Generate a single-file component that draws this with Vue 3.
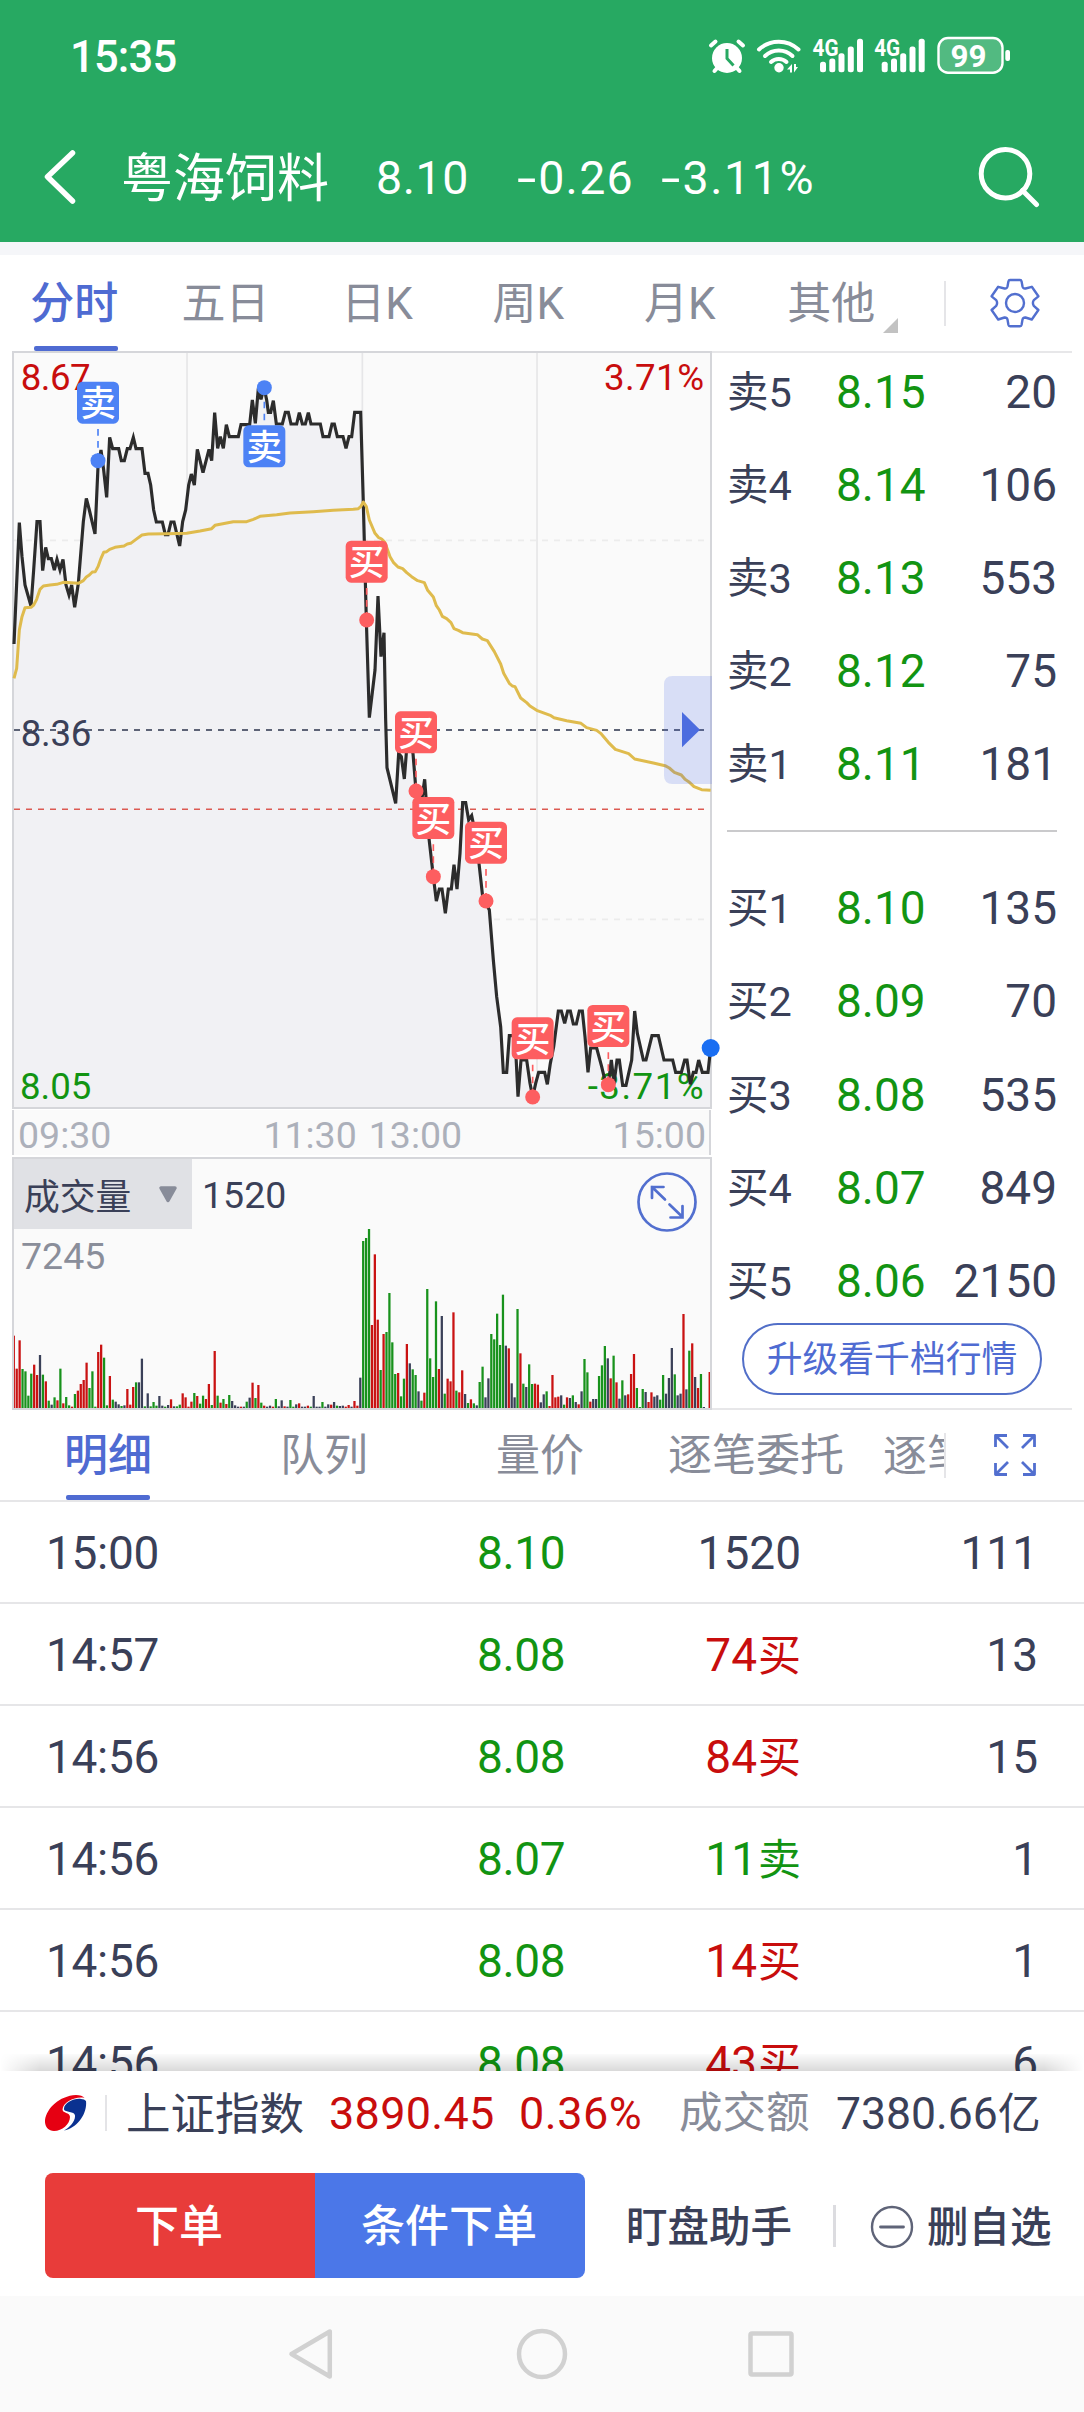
<script setup>
const periodTabs = ['分时', '五日', '日K', '周K', '月K', '其他']

const asks = [
  ['卖5', '8.15', '20'],
  ['卖4', '8.14', '106'],
  ['卖3', '8.13', '553'],
  ['卖2', '8.12', '75'],
  ['卖1', '8.11', '181'],
]
const bids = [
  ['买1', '8.10', '135'],
  ['买2', '8.09', '70'],
  ['买3', '8.08', '535'],
  ['买4', '8.07', '849'],
  ['买5', '8.06', '2150'],
]

const detailTabs = ['明细', '队列', '量价', '逐笔委托']

const trades = [
  { time: '15:00', price: '8.10', vol: '1520', side: '', count: '111' },
  { time: '14:57', price: '8.08', vol: '74', side: '买', count: '13' },
  { time: '14:56', price: '8.08', vol: '84', side: '买', count: '15' },
  { time: '14:56', price: '8.07', vol: '11', side: '卖', count: '1' },
  { time: '14:56', price: '8.08', vol: '14', side: '买', count: '1' },
  { time: '14:56', price: '8.08', vol: '43', side: '买', count: '6' },
]
const sideClass = { 买: 'red', 卖: 'green', '': '' }

// Chart space uses three units per pixel.
const price =
  '42,912 58,548 66,650 75,735 93,798 101,690 111,545 120,545 128,692 137,622 145,656 154,656 163,690 171,658 180,690 189,658 198,735 207,765 215,735 224,802 235,730 250,545 259,475 268,510 285,582 294,380 303,330 311,390 320,472 329,292 338,326 356,326 364,362 373,362 382,326 390,326 400,292 408,326 426,326 435,400 444,400 452,435 461,510 469,546 487,546 496,584 504,584 513,546 522,546 539,618 548,545 557,510 566,435 574,402 583,435 592,328 609,398 627,328 635,362 644,218 653,325 661,290 670,325 679,254 688,290 715,290 723,254 749,254 757,180 766,250 775,145 783,178 792,142 800,180 805,217 812,217 820,182 829,252 847,252 856,217 865,217 873,252 890,252 898,218 907,252 916,252 925,218 933,252 961,252 969,290 987,290 996,252 1003,252 1012,290 1029,290 1038,325 1047,290 1055,290 1064,217 1082,217 1090,490 1099,840 1108,1133 1125,990 1134,768 1143,950 1152,878 1157,1140 1161,1283 1187,1390 1196,1240 1204,1250 1213,1317 1222,1200 1239,1240 1248,1353 1257,1370 1266,1375 1274,1318 1280,1400 1287,1495 1300,1610 1309,1683 1318,1647 1326,1647 1336,1720 1345,1647 1354,1647 1362,1574 1371,1647 1380,1540 1388,1388 1397,1388 1406,1440 1415,1427 1424,1470 1437,1570 1448,1670 1468,1710 1480,1860 1490,1970 1502,2060 1510,2197 1520,2197 1528,2087 1545,2087 1554,2270 1563,2160 1580,2160 1590,2230 1598,2271 1607,2230 1616,2197 1634,2197 1642,2233 1651,2170 1661,2120 1675,2013 1684,2013 1694,2050 1703,2013 1711,2013 1720,2052 1729,2052 1738,2013 1747,2013 1755,2090 1764,2197 1772,2124 1790,2124 1805,2180 1817,2230 1825,2234 1834,2160 1842,2230 1851,2160 1858,2160 1868,2236 1878,2236 1886,2200 1895,2160 1904,2013 1912,2080 1921,2120 1930,2160 1938,2160 1956,2087 1975,2087 1992,2160 2018,2160 2027,2197 2044,2197 2054,2160 2061,2160 2071,2233 2080,2197 2088,2197 2096,2160 2107,2197 2124,2197 2132,2124'

const average =
  '42,1015 50,985 58,870 66,830 75,803 93,802 101,795 110,778 120,748 130,738 150,735 170,733 190,727 235,730 250,722 259,711 268,705 277,696 286,695 294,680 303,655 311,637 320,635 329,628 345,622 372,618 382,612 392,610 408,598 426,585 445,582 500,581 560,580 600,573 635,566 645,556 680,549 700,545 740,545 760,538 780,529 830,524 870,519 940,515 1000,511 1060,508 1075,506 1082,500 1090,486 1099,500 1108,540 1125,580 1135,592 1145,597 1154,606 1163,630 1170,650 1180,667 1194,681 1208,686 1220,698 1235,710 1253,722 1273,728 1283,751 1300,771 1309,797 1318,810 1327,829 1340,836 1353,848 1362,866 1375,871 1388,878 1432,884 1447,897 1462,902 1483,935 1502,972 1511,1000 1528,1030 1537,1038 1545,1040 1562,1074 1580,1088 1590,1098 1610,1111 1653,1127 1662,1133 1700,1142 1743,1150 1760,1163 1790,1171 1802,1180 1825,1207 1846,1228 1886,1241 1904,1257 1960,1269 1995,1277 2008,1284 2023,1297 2044,1305 2055,1318 2066,1325 2082,1340 2105,1349 2132,1351'

// x, y: trade dot; top: upper edge of its tag
const markers = [
  { kind: '卖', x: 294, y: 362, top: 125 },
  { kind: '卖', x: 793, y: 143, top: 256 },
  { kind: '买', x: 1100, y: 840, top: 602 },
  { kind: '买', x: 1248, y: 1353, top: 1114 },
  { kind: '买', x: 1300, y: 1610, top: 1371 },
  { kind: '买', x: 1458, y: 1683, top: 1445 },
  { kind: '买', x: 1598, y: 2271, top: 2032 },
  { kind: '买', x: 1825, y: 2234, top: 1995 },
].map((m) => ({
  ...m,
  color: m.kind === '卖' ? '#4d82f5' : '#fd5e60',
  y1: m.y > m.top ? m.top + 142 : m.y + 42,
  y2: m.y > m.top ? m.y - 20 : m.top,
}))

// One bar per minute: colour letter and height.
const colors = { r: '#c91212', g: '#18921c', d: '#3a4058' }
const bars = (
  'r217 r118 r203 g117 g110 g37 g103 r130 r99 d159 g100 r80 g22 d10 g32 r23 g118 r14 g33 g8 r4 g42 r52 r72 r84 r136 g60 g110 g4 r168 r190 g151 g8 r96 g25 d19 d11 g6 d8 r57 r10 r63 g77 d77 d148 g5 d44 g5 g18 g7 d36 d7 g4 d9 r26 d5 g5 g10 r44 r32 r4 r19 g45 r36 g13 g37 r27 r72 g9 r171 g37 r16 g27 r12 g39 d21 d8 d4 r4 d4 g19 d31 r76 g30 r69 g16 r7 d4 d7 r4 g27 d5 d23 r5 d4 g24 g4 d11 r14 d4 d4 r7 g4 d36 d4 d4 g18 d4 d11 r10 d18 g7 d6 d7 r4 r9 d4 r21 r7 d91 ' +
  'g501 g510 g537 r249 r461 r265 g114 r222 g228 g345 g197 g102 r105 g35 g88 r192 d134 g116 g99 d50 g22 r46 g357 g149 g93 g320 r117 d276 g43 r88 r80 r287 g52 r47 r113 d42 g15 r26 g14 d8 g78 g124 d32 d89 g222 g206 g283 g189 g340 d187 r179 d74 d32 g297 r164 g73 d63 g131 g72 r73 r70 d17 d41 g50 r6 r99 r32 r34 d38 g10 r32 d30 g38 d18 r11 d50 g147 g107 r19 d27 d27 g96 g128 g186 d149 r89 g157 r77 d28 g83 d38 r41 r102 r162 g60 g3 g57 d48 r18 r47 d34 d38 g25 g99 d43 d90 d180 g101 d38 d43 r282 d56 g172 r194 d93 r60 g102 d3 d0 r108'
)
  .split(' ')
  .map((s, i) => ({ x: 38 + i * 8.735, h: +s.slice(1), fill: colors[s[0]] }))
</script>

<template>
  <div class="screen">
    <header class="top">
      <div class="status">
        <span class="clock">15:35</span>
        <svg class="sysicons" width="309" height="44" viewBox="704 34 309 44" fill="#fff">
          <circle cx="727" cy="58" r="15" />
          <g stroke="#fff" stroke-width="4" stroke-linecap="round">
            <path d="M711 45.500L715.500 41.500M743 45.500L738.500 41.500" />
            <path d="M718 67L714.500 71M736 67L739.500 71" />
          </g>
          <path d="M727 49V58.500L733.500 65.500" fill="none" stroke="#27a962" stroke-width="3" />
          <g fill="none" stroke="#fff" stroke-width="4" stroke-linecap="round">
            <path d="M759 49.500A29 29 0 0 1 798.500 49.500" />
            <path d="M765 56A20 20 0 0 1 792.500 56" />
            <path d="M771 62A11.500 11.500 0 0 1 786.500 62" />
          </g>
          <circle cx="779" cy="67.700" r="4.700" />
          <path d="M787 69.500L792 64V72.500H790V69.500ZM800.800 67H798L794 72.500V64H796V67Z" />
          <g v-for="dx in [0, 61.700]" :key="dx" :transform="`translate(${dx} 0)`">
            <text x="812.500" y="55.500" font-size="23" font-weight="700" textLength="26" lengthAdjust="spacingAndGlyphs">4G</text>
            <rect x="820" y="61.700" width="6" height="10.500" rx="2.500" />
            <rect x="829.300" y="58.500" width="6" height="13.700" rx="2.500" />
            <rect x="838.500" y="53.300" width="6" height="18.900" rx="2.500" />
            <rect x="847.800" y="46.600" width="6" height="25.600" rx="2.500" />
            <rect x="857" y="38.700" width="6" height="33.500" rx="2.500" />
          </g>
          <rect x="938.500" y="38" width="64" height="34.700" rx="9.500" fill="#fff" fill-opacity=".2" stroke="#fff" stroke-width="2.400" />
          <text x="950.500" y="67" font-size="32" font-weight="700" textLength="36" lengthAdjust="spacingAndGlyphs">99</text>
          <rect x="1005.300" y="50" width="4.700" height="11" rx="2" />
        </svg>
      </div>
      <div class="title">
        <svg class="back" width="40" height="60" viewBox="40 146 40 60">
          <path d="M72.500 152L47.500 175.700L72.500 200" fill="none" stroke="#fff" stroke-width="5.500" stroke-linecap="round" stroke-linejoin="round" />
        </svg>
        <span class="name">粤海饲料</span>
        <span class="quote">8.10</span>
        <span class="quote diff"><b>-</b>0.26</span>
        <span class="quote pct"><b>-</b>3.11%</span>
        <svg class="search" width="64" height="64" viewBox="976 144 64 64" fill="none" stroke="#fff" stroke-width="5" stroke-linecap="round">
          <circle cx="1005.500" cy="172.700" r="24.300" />
          <path d="M1022.500 189.500L1036.500 203.500" />
        </svg>
      </div>
    </header>

    <nav class="periods">
      <span v-for="(t, i) in periodTabs" :key="t" class="tab" :class="{ active: i === 0 }">
        {{ t }}
        <svg v-if="t === '其他'" class="corner" width="15" height="15" viewBox="0 0 15 15"><path d="M15 0V15H0Z" fill="#c2c2c2" /></svg>
      </span>
      <i class="vline"></i>
      <svg class="gear" width="52" height="52" viewBox="-26 -26 52 52" fill="none" stroke="#526fcf" stroke-width="2.400" stroke-linejoin="round">
        <path d="M-5 -23H5Q6.300 -23 6.600 -21.500L7.500 -16.500Q8.200 -14.200 10.500 -14.500L16.800 -16.200L23.400 -6.700L18.800 -2.800Q17 0 18.800 2.800L23.400 7L16.800 16.500L10.500 14.500Q8.200 14.300 7.500 16.500L6.600 21.800Q6.300 23.300 5 23.300H-5Q-6.300 23.300 -6.600 21.800L-7.500 16.500Q-8.200 14.300 -10.500 14.500L-16.800 16.500L-23.400 7L-18.800 2.800Q-17 0 -18.800 -2.800L-23.400 -6.700L-16.800 -16.200L-10.500 -14.500Q-8.200 -14.200 -7.500 -16.500L-6.600 -21.500Q-6.300 -23 -5 -23Z" />
        <circle r="9" />
      </svg>
    </nav>

    <main class="market">
      <section class="charts">
        <svg class="plot" width="700" height="758" viewBox="36 33 2100 2274">
          <rect x="39" y="36" width="2094" height="2268" fill="#fafafa" />
          <g stroke="#e6e6e8" stroke-width="5">
            <path d="M561 36V2304M1087 36V2304M1611 36V2304" />
            <path d="M42 601H2130M42 1738H2130" stroke="#ececec" stroke-dasharray="18" />
          </g>
          <polygon :points="`42,2301 ${price} 2132,2301`" fill="#f1f1f4" />
          <path d="M42 1170H2130" stroke="#5d6376" stroke-width="5.500" stroke-dasharray="18" />
          <path d="M42 1408H2130" stroke="#dc5a52" stroke-width="4.500" stroke-dasharray="18" />
          <rect x="39" y="36" width="2094" height="2268" fill="none" stroke="#d5d6da" stroke-width="6" />
          <g font-size="110">
            <text x="62" y="150" fill="#c80d0d" textLength="210">8.67</text>
            <text x="1812" y="150" fill="#c80d0d" textLength="300">3.71%</text>
            <text x="62" y="1217" fill="#3a4058" textLength="212">8.36</text>
            <text x="60" y="2277" fill="#129412" textLength="214">8.05</text>
            <text x="1763" y="2276" fill="#129412" textLength="348">-3.71%</text>
          </g>
          <polyline :points="price" fill="none" stroke="#2c2c2c" stroke-width="9.500" />
          <polyline :points="average" fill="none" stroke="#dfbb4d" stroke-width="9" stroke-linejoin="round" />
          <g v-for="m in markers" :key="m.x">
            <path :d="`M${m.x} ${m.y1}V${m.y2}`" :stroke="m.color" stroke-width="5" stroke-dasharray="20 16" />
            <circle :cx="m.x" :cy="m.y" r="22.500" :fill="m.color" />
            <rect :x="m.x - 63" :y="m.top" width="126" height="126" rx="16" :fill="m.color" />
            <text :x="m.x" :y="m.top + 104" font-size="107" font-weight="500" fill="#fff" text-anchor="middle">{{ m.kind }}</text>
          </g>
          <path d="M2136 1008H2018Q1992 1008 1992 1034V1306Q1992 1332 2018 1332H2136Z" fill="#4466e6" fill-opacity=".19" />
          <path d="M2046 1116L2100 1169L2046 1222Z" fill="#4c6cdf" />
          <circle cx="2132" cy="2124" r="27" fill="#1a6ef2" />
        </svg>

        <div class="axis">
          <span>09:30</span><span class="noon">11:30</span><span class="pm">13:00</span><span class="close">15:00</span>
        </div>

        <div class="volume">
          <svg class="bars" width="696" height="249" viewBox="42 297 2088 747">
            <rect v-for="(b, i) in bars" :key="i" :x="b.x" :y="1044 - b.h" width="6.800" :height="b.h" :fill="b.fill" />
          </svg>
          <div class="volhead">
            <span class="picker">成交量
              <svg width="20" height="17" viewBox="0 0 20 17"><path d="M3 2H17L10 14.500Z" fill="#888c99" stroke="#888c99" stroke-width="3.500" stroke-linejoin="round" /></svg>
            </span>
            <span class="volnow">1520</span>
            <svg class="expand" width="60" height="60" viewBox="-30 -30 60 60" fill="none" stroke="#526fcf" stroke-width="2.700">
              <circle r="28.500" />
              <path d="M-2 -2.500L-15 -15M-15 -4V-15H-3.500M2.500 2.500L15.500 15M15.500 4V15.500H3.500" stroke-linecap="round" />
            </svg>
          </div>
          <div class="volmax">7245</div>
        </div>
      </section>

      <aside class="book">
        <div class="side">
          <div v-for="r in asks" :key="r[0]" class="level">
            <span class="lv">{{ r[0] }}</span><span class="px">{{ r[1] }}</span><span class="qty">{{ r[2] }}</span>
          </div>
        </div>
        <div class="split"></div>
        <div class="side">
          <div v-for="r in bids" :key="r[0]" class="level">
            <span class="lv">{{ r[0] }}</span><span class="px">{{ r[1] }}</span><span class="qty">{{ r[2] }}</span>
          </div>
        </div>
        <button class="upgrade">升级看千档行情</button>
      </aside>
    </main>

    <nav class="details">
      <span v-for="(t, i) in detailTabs" :key="t" class="dtab" :class="{ active: i === 0 }">{{ t }}</span>
      <span class="cut">逐笔</span>
      <svg class="full" width="44" height="44" viewBox="0 0 44 44" fill="none" stroke="#526fcf" stroke-width="2.800" stroke-linejoin="round">
        <path d="M2.500 14V2.500H14M2.500 2.500L15 15M30 2.500H41.500V14M41.500 2.500L29 15M2.500 30V41.500H14M2.500 41.500L15 29M30 41.500H41.500V30M41.500 41.500L29 29" />
      </svg>
    </nav>

    <section class="trades">
      <div v-for="(t, i) in trades" :key="i" class="trade">
        <span class="time">{{ t.time }}</span>
        <span class="deal green">{{ t.price }}</span>
        <span class="amount" :class="sideClass[t.side]">{{ t.vol }}<em v-if="t.side">{{ t.side }}</em></span>
        <span class="count">{{ t.count }}</span>
      </div>
    </section>

    <footer class="dock">
      <div class="index">
        <svg class="logo" width="42" height="37" viewBox="0 0 42 37">
          <path d="M0 25C2 13 14 1 31 0C35 0 38 1 39.500 3C31 1 18 7 17.500 14.500C17.500 18.500 25 17 25 22C25 29 17 36 9 36C3 36 -.5 31 0 25Z" fill="#e60012" />
          <path d="M41 6C42.500 19 32 33 19 35.500C25 32 30.500 26 30 20.500C29.500 16 20 17.500 19 14.500C18.500 8 29 3 36 4Q39.500 4 41 6Z" fill="#0a3190" />
        </svg>
        <i class="ivline"></i>
        <span class="iname">上证指数</span>
        <span class="ival red">3890.45</span>
        <span class="ipct red">0.36%</span>
        <span class="tlabel">成交额</span>
        <span class="tval">7380.66<em>亿</em></span>
      </div>
      <div class="actions">
        <button class="order">下单</button>
        <button class="cond">条件下单</button>
        <span class="watch">盯盘助手</span>
        <i class="avline"></i>
        <svg class="minus" width="44" height="44" viewBox="-22 -22 44 44" fill="none" stroke="#5f6478" stroke-width="2.400">
          <circle r="20" /><path d="M-11.500 0H11.500" stroke-width="2.800" stroke-linecap="round" />
        </svg>
        <span class="remove">删自选</span>
      </div>
    </footer>

    <div class="sysnav">
      <svg width="1084" height="116" viewBox="0 2296 1084 116" fill="none" stroke="#d1d1d1" stroke-width="4.500" stroke-linejoin="round">
        <path d="M329.800 2331.500V2376.500L291.500 2354Z" />
        <circle cx="542" cy="2354" r="23" />
        <rect x="750.500" y="2333.500" width="41" height="41" rx="1.500" />
      </svg>
    </div>
  </div>
</template>

<style>
body {
  margin: 0;
  background: #fff;
}
</style>

<style scoped>
.screen {
  width: 1084px;
  height: 2412px;
  overflow: hidden;
  display: flex;
  flex-direction: column;
  background: #fff;
  color: #3a4058;
  font-family: Roboto, 'Noto Sans CJK SC', sans-serif;
  white-space: nowrap;
}
.screen > * {
  flex: none;
}
svg {
  display: block;
  flex: none;
}
text {
  font-family: Roboto, 'Noto Sans CJK SC', sans-serif;
}
button {
  font-family: inherit;
  padding: 0;
  border: 0;
}
em {
  font-style: normal;
}
.red {
  color: #c80d0d;
}
.green {
  color: #129412;
}

.top {
  height: 242px;
  background: #27a962;
  color: #fff;
}
.status {
  height: 112px;
  display: flex;
  align-items: center;
}
.clock {
  width: 634px;
  margin-left: 70px;
  font-size: 43.500px;
  font-weight: 500;
  line-height: 60px;
  letter-spacing: -0.800px;
  padding-top: 3px;
}
.title {
  height: 130px;
  display: flex;
  align-items: center;
}
.back {
  margin-left: 40px;
}
.name {
  width: 210px;
  margin: 0 0 0 41px;
  font-size: 52px;
  line-height: 60px;
  padding-top: 5px;
}
.quote {
  width: 141px;
  margin-left: 45px;
  font-size: 46.500px;
  line-height: 60px;
  letter-spacing: 0.600px;
  padding-top: 2px;
}
.quote b {
  display: inline-block;
  font-weight: 400;
  transform: scaleX(1.5);
  transform-origin: left;
  margin-right: 7px;
}
.diff {
  width: 144px;
  margin-left: 0;
  letter-spacing: 1.300px;
}
.pct {
  width: 315px;
  margin-left: 0;
  letter-spacing: 1.600px;
}

.periods {
  height: 96px;
  border-top: 13px solid #f5f6f9;
  display: flex;
  align-items: center;
}
.tab {
  position: relative;
  box-sizing: border-box;
  width: 151.400px;
  height: 96px;
  padding-right: 3px;
  text-align: center;
  font-size: 44px;
  line-height: 98px;
  color: #888c99;
}
.active {
  color: #4f6bd2;
  font-weight: 500;
}
.active::after {
  content: '';
  position: absolute;
  left: 50%;
  bottom: 0;
  width: 84px;
  height: 5px;
  margin-left: -42px;
  border-radius: 2px;
  background: #4f6bd2;
}
.corner {
  position: absolute;
  left: 126px;
  top: 63px;
}
.vline {
  width: 2px;
  height: 45px;
  margin-left: 36px;
  background: #e5e5e8;
}
.gear {
  margin-left: 43px;
}

.market {
  display: flex;
  height: 1059px;
}
.charts {
  width: 700px;
  margin-left: 12px;
}
.plot {
  overflow: visible;
  position: relative;
}
.axis {
  box-sizing: border-box;
  width: 699px;
  height: 45px;
  margin: 1px 0 2px;
  padding-left: 4px;
  border: solid #d5d6da;
  border-width: 0 2px;
  background: #fafafa;
  display: flex;
  font-size: 37.500px;
  line-height: 51px;
  color: #acb0ba;
}
.noon {
  margin-left: 152px;
}
.pm {
  margin-left: 12px;
}
.close {
  margin-left: auto;
  margin-right: 3px;
}
.volume {
  position: relative;
  box-sizing: border-box;
  height: 253px;
  border: 2px solid #d5d6da;
  background: #fafafa;
}
.bars {
  position: absolute;
  left: 0;
  top: 0;
}
.volhead {
  position: relative;
  display: flex;
  height: 70px;
}
.picker {
  width: 178px;
  background: #e0e1e5;
  box-sizing: border-box;
  padding: 0 14px 0 10px;
  display: flex;
  align-items: center;
  justify-content: space-between;
  font-size: 35.800px;
}
.volnow {
  margin-left: 10px;
  font-size: 37.500px;
  line-height: 72px;
}
.expand {
  margin: 13px 13px 0 auto;
}
.volmax {
  position: relative;
  padding-left: 7px;
  font-size: 37.500px;
  line-height: 54px;
  color: #8a8e9a;
}

.book {
  box-sizing: border-box;
  width: 360px;
  border: solid #e7e7e9;
  border-width: 2px 0;
  padding: 9px 15px 0;
}
.side {
  display: flex;
  flex-direction: column;
  gap: 33.100px;
}
.level {
  display: flex;
  height: 60px;
  line-height: 61px;
  font-size: 46px;
}
.lv {
  width: 109px;
  font-size: 41.500px;
  line-height: 62px;
}
.px {
  color: #129412;
}
.qty {
  margin-left: auto;
  margin-right: 0;
}
.split {
  height: 2px;
  margin: 36px 0 46px;
  background: #cacacc;
}
.upgrade {
  box-sizing: border-box;
  display: block;
  width: 300px;
  height: 72px;
  margin: 12px 0 0 15px;
  border: 2px solid #526fc8;
  border-radius: 36px;
  background: #fff;
  color: #4f6bd2;
  font-size: 35.800px;
  line-height: 71px;
}

.details {
  height: 90px;
  border-bottom: 2px solid #e6e6e8;
  display: flex;
  align-items: center;
}
.dtab {
  position: relative;
  width: 216px;
  height: 90px;
  text-align: center;
  font-size: 44px;
  line-height: 93px;
  color: #888c99;
}
.dtab.active {
  color: #4f6bd2;
}
.cut {
  width: 61px;
  height: 45px;
  margin-left: 19px;
  overflow: hidden;
  border-right: 2px solid #e5e5e8;
  font-size: 44px;
  line-height: 48px;
  color: #888c99;
}
.full {
  margin-left: 47px;
}

.trades {
  height: 569px;
  overflow: hidden;
}
.trade {
  box-sizing: border-box;
  height: 102px;
  border-bottom: 2px solid #e6e6e8;
  display: flex;
  font-size: 46px;
  line-height: 102px;
}
.time {
  width: 431px;
  margin-left: 46px;
  letter-spacing: -0.300px;
}
.amount {
  margin-left: auto;
  width: 200px;
  text-align: right;
}
.deal {
  width: 100px;
  letter-spacing: -0.400px;
}
.amount em {
  font-size: 43px;
  margin-left: 1px;
}
.count {
  width: 237px;
  margin-right: 46px;
  text-align: right;
}

.dock {
  position: relative;
  height: 225px;
  background: #fff;
}
.dock::before {
  content: '';
  position: absolute;
  left: 0;
  right: 0;
  top: -17px;
  height: 17px;
  background: linear-gradient(rgba(0, 0, 0, 0.015), rgba(0, 0, 0, 0.15));
  mask-image: linear-gradient(90deg, transparent, #000 40px, #000 1044px, transparent);
}
.index {
  height: 84px;
  display: flex;
  align-items: center;
  line-height: 60px;
}
.logo {
  margin-left: 45px;
}
.ivline {
  width: 2px;
  height: 36px;
  margin: 0 19px 0 18px;
  background: #e4e4e7;
}
.iname {
  width: 203px;
  font-size: 44.500px;
  padding-top: 3px;
}
.ival {
  width: 190px;
  font-size: 45px;
  letter-spacing: 0.300px;
  padding-top: 2px;
}
.ipct {
  width: 160px;
  font-size: 45px;
  letter-spacing: 0.500px;
  padding-top: 2px;
}
.tlabel {
  width: 157px;
  font-size: 43.500px;
  padding-top: 2px;
  color: #888c99;
}
.tval {
  font-size: 44.500px;
  padding-top: 2px;
}
.tval em {
  font-size: 43px;
}
.actions {
  height: 105px;
  margin-top: 18px;
  display: flex;
  align-items: center;
}
.order,
.cond {
  box-sizing: border-box;
  height: 105px;
  width: 270px;
  padding-right: 2px;
  color: #fff;
  font-size: 44px;
  font-weight: 500;
  line-height: 109px;
}
.order {
  margin-left: 45px;
  background: #e83c3a;
  border-radius: 8px 0 0 8px;
}
.cond {
  background: #4b77e8;
  border-radius: 0 8px 8px 0;
}
.watch,
.remove {
  font-size: 41.500px;
  font-weight: 500;
  line-height: 60px;
  padding-top: 5px;
}
.watch {
  width: 168px;
  margin-left: 41px;
}
.avline {
  width: 3px;
  height: 42px;
  margin: 0 34px 0 39px;
  background: #dcdce0;
}
.minus {
  margin-top: 2px;
}
.remove {
  margin-left: 13px;
}
.sysnav {
  height: 116px;
  background: #fafafa;
}
</style>
